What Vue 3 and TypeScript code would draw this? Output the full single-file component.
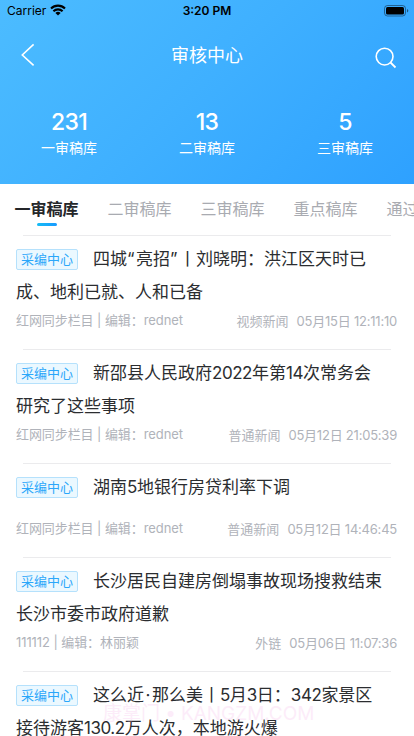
<script setup lang="ts">
interface Stat { value: number; label: string }
interface Article {
  lines: string[]
  source: string
  editor: string
  kind: string
  time: string
}
interface Run { text: string; cls: string }

const stats: Stat[] = [
  { value: 231, label: '一审稿库' },
  { value: 13, label: '二审稿库' },
  { value: 5, label: '三审稿库' },
]

const tabs: string[] = ['一审稿库', '二审稿库', '三审稿库', '重点稿库', '通过稿库']

const articles: Article[] = [
  { lines: ['四城“亮招”丨刘晓明：洪江区天时已', '成、地利已就、人和已备'], source: '红网同步栏目', editor: 'rednet', kind: '视频新闻', time: '05月15日 12:11:10' },
  { lines: ['新邵县人民政府2022年第14次常务会', '研究了这些事项'], source: '红网同步栏目', editor: 'rednet', kind: '普通新闻', time: '05月12日 21:05:39' },
  { lines: ['湖南5地银行房贷利率下调'], source: '红网同步栏目', editor: 'rednet', kind: '普通新闻', time: '05月12日 14:46:45' },
  { lines: ['长沙居民自建房倒塌事故现场搜救结束', '长沙市委市政府道歉'], source: '111112', editor: '林丽颖', kind: '外链', time: '05月06日 11:07:36' },
  { lines: ['这么近·那么美丨5月3日：342家景区', '接待游客130.2万人次，本地游火爆'], source: '红网同步栏目', editor: 'rednet', kind: '普通新闻', time: '05月03日 10:20:18' },
]

// Splits mixed text so digits and narrow punctuation get their own spacing.
function runs(text: string): Run[] {
  return text.split(/([\d.]+|[“”]|·)/).filter(Boolean).map((part) => ({
    text: part,
    cls: /^\d/.test(part) ? 'digits' : /^[“”]$/.test(part) ? 'quote' : part === '·' ? 'dot' : '',
  }))
}
</script>

<template>
  <div class="screen">
    <header class="hero">
      <div class="status">
        <div class="carrier">
          <span>Carrier</span>
          <svg class="wifi" width="16" height="12" viewBox="0 0 16 12">
            <path d="M1 4.5A10 10 0 0 1 15 4.5M3.4 7.2A6.6 6.6 0 0 1 12.6 7.2" fill="none" stroke="#000" stroke-width="2.1" />
            <path d="M8 11.6L5.4 9a3.7 3.7 0 0 1 5.2 0z" fill="#000" />
          </svg>
        </div>
        <span class="clock">3:20 PM</span>
        <svg class="battery" width="25" height="12" viewBox="0 0 25 12">
          <rect x=".5" y=".5" width="21" height="10.5" rx="3" fill="none" stroke="#000" stroke-opacity=".42" />
          <rect x="2" y="2" width="18" height="7.5" rx="1.5" fill="#000" />
          <path d="M23 4v3.6q1.3-.5 1.3-1.8T23 4z" fill="#000" fill-opacity=".5" />
        </svg>
      </div>
      <div class="nav">
        <svg width="14" height="24" viewBox="0 0 14 24"><path d="M12.6 1.4L1.3 12l11.3 10.4" fill="none" stroke="#fff" stroke-width="1.6" /></svg>
        <h1>审核中心</h1>
        <svg class="search" width="22" height="22" viewBox="0 0 22 22">
          <circle cx="9.6" cy="9.6" r="8.4" fill="none" stroke="#fff" stroke-width="1.6" />
          <path d="M15.5 15.5l5 5" stroke="#fff" stroke-width="1.8" />
        </svg>
      </div>
      <div class="stats">
        <div v-for="s in stats" :key="s.label" class="stat">
          <strong>{{ s.value }}</strong>
          <span>{{ s.label }}</span>
        </div>
      </div>
    </header>

    <nav class="tabs">
      <span v-for="(t, i) in tabs" :key="t" class="tab" :class="{ active: i === 0 }">{{ t }}</span>
    </nav>

    <main>
      <article v-for="a in articles" :key="a.time" class="item" :class="{ short: a.lines.length === 1 }">
        <div class="headline">
          <div v-for="(line, i) in a.lines" :key="i" class="line">
            <span v-if="i === 0" class="tag">采编中心</span>
            <span><span v-for="(r, j) in runs(line)" :key="j" :class="r.cls">{{ r.text }}</span></span>
          </div>
        </div>
        <div class="meta">
          <span class="from">{{ a.source }} | 编辑：{{ a.editor }}</span>
          <span class="when"><span>{{ a.kind }}</span><span class="time">{{ a.time }}</span></span>
        </div>
      </article>
    </main>
    <div class="watermark">康掌门 • KANGZM.COM</div>
  </div>
</template>

<style>
body { margin: 0; overflow: hidden; }
</style>

<style scoped>
.screen {
  position: relative;
  width: 414px;
  height: 736px;
  overflow: hidden;
  background: #fff;
  font-family: Inter, "Noto Sans CJK SC", sans-serif;
}
.hero {
  height: 184px;
  color: #fff;
  background: linear-gradient(135deg, #4cbcff 0%, #3fb0ff 48%, #2ea1ff 100%);
}
.status {
  display: grid;
  grid-template-columns: 1fr auto 1fr;
  align-items: center;
  height: 22px;
  padding: 0 5px 0 7px;
  color: #000;
  font-size: 12px;
}
.carrier { display: flex; align-items: center; gap: 4px; margin-top: -1px; }
.wifi { margin-top: -1px; }
.clock { margin: -1px 2px 0 0; font-weight: 600; }
.battery { justify-self: end; margin-top: -1px; }
.nav {
  display: flex;
  align-items: center;
  justify-content: space-between;
  height: 66px;
  padding: 0 17px 0 21px;
}
.nav h1 { margin: 2px 0 0 4px; font-size: 18px; font-weight: 400; line-height: 26px; }
.search { margin-top: 6px; }
.stats { display: flex; padding-top: 19px; }
.stat { flex: 1; display: flex; flex-direction: column; align-items: center; }
.stat strong { font-size: 23px; font-weight: 450; line-height: 30px; letter-spacing: -.7px; }
.stat span { font-size: 14px; line-height: 20px; margin-top: 1px; }
.tabs {
  display: flex;
  gap: 29px;
  height: 51px;
  padding-left: 14.5px;
  white-space: nowrap;
  overflow: hidden;
}
.tab {
  display: flex;
  flex-direction: column;
  align-items: center;
  flex: none;
  padding-top: 13px;
  font-size: 16px;
  line-height: 24px;
  color: #a9abb1;
}
.active { color: #242629; font-weight: 700; }
.active::after {
  content: "";
  width: 20px;
  height: 3px;
  margin-top: 2px;
  border-radius: 2px;
  background: linear-gradient(90deg, #16bdf5, #1899ff);
}
.item { height: 114px; padding: 0 16px; box-sizing: border-box; }
.item::before { content: ""; display: block; height: 1px; margin: 0 7px; background: #ebebed; }
.headline { height: 66px; padding-top: 5px; color: #2b2d30; font-size: 17px; }
.short { height: 94px; }
.short .headline { height: 46px; }
.line { display: flex; align-items: center; height: 33px; white-space: nowrap; }
.digits { letter-spacing: -.45px; }
.quote { letter-spacing: 1.5px; }
.dot { margin: 0 1.5px; }
.tag {
  box-sizing: border-box;
  width: 62px;
  height: 21px;
  margin: 4px 15px 0 0;
  border: 1px solid #b5e1fc;
  border-radius: 2px;
  background: #ebf8ff;
  color: #2ba7fa;
  font-size: 13px;
  line-height: 19px;
  text-align: center;
}
.meta {
  display: flex;
  justify-content: space-between;
  align-items: center;
  height: 26px;
  color: #b0b3ba;
  font-size: 13px;
  white-space: nowrap;
}
.from { margin-top: -2px; letter-spacing: -.08px; }
.when { display: flex; gap: 8px; margin-right: 1px; }
.time { letter-spacing: -.22px; }
.watermark {
  position: absolute;
  left: 103px;
  top: 700px;
  color: #f7b6e8;
  opacity: .25;
  font-size: 19px;
  line-height: 28px;
  letter-spacing: -.05px;
  white-space: nowrap;
}
</style>
